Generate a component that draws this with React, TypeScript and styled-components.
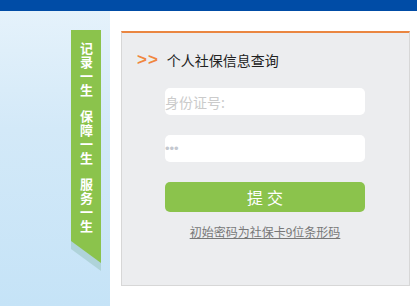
import styled, { createGlobalStyle } from "styled-components";

const GlobalStyle = createGlobalStyle`
  html, body {
    margin: 0;
    padding: 0;
    background: #fff;
    font-family: "Noto Sans CJK SC", "Liberation Sans", sans-serif;
  }
`;

const Page = styled.div`
  width: 417px;
  height: 306px;
  display: flex;
  flex-direction: column;
  overflow: hidden;
`;

const TopBar = styled.div`
  height: 11px;
  background: #004ca6;
  flex: 0 0 auto;
`;

const Body = styled.div`
  flex: 1;
  display: flex;
`;

const Side = styled.div`
  width: 110px;
  flex: 0 0 auto;
  background: linear-gradient(to bottom, #e5f2fb 0%, #d3e9f8 40%, #c5e3f7 100%);
  padding: 19px 0 0 71px;
  box-sizing: border-box;
`;

const Ribbon = styled.div`
  position: relative;
  width: 30px;
  height: 241px;

  &::before {
    content: "";
    position: absolute;
    left: 0;
    top: 8px;
    width: 30px;
    height: 233px;
    background: #afd3d9;
    clip-path: polygon(0 0, 100% 0, 100% 100%, 0 211px);
  }
`;

const RibbonBody = styled.div`
  position: relative;
  width: 30px;
  height: 233px;
  background: #8bc34c;
  clip-path: polygon(0 0, 100% 0, 100% 100%, 0 211px);
  display: flex;
  flex-direction: column;
  align-items: center;
  padding-top: 12px;
  box-sizing: border-box;
  gap: 12px;
`;

const Group = styled.div`
  writing-mode: vertical-rl;
  text-orientation: upright;
  color: #fff;
  font-size: 13px;
  font-weight: bold;
  letter-spacing: 1px;
  line-height: 16px;
`;

const Main = styled.div`
  flex: 1;
  padding: 20px 7px 0 11px;
`;

const Panel = styled.div`
  height: 255px;
  box-sizing: border-box;
  background: #ecedef;
  border: 1px solid #d7d7d7;
  border-top: 2px solid #ea8641;
  padding: 17px 0 0 15px;
`;

const Title = styled.div`
  display: flex;
  align-items: center;
  height: 20px;
  font-size: 14px;
  color: #222;
`;

const Arrows = styled.span`
  color: #f0873f;
  font-family: "Liberation Sans", sans-serif;
  font-weight: bold;
  font-size: 17px;
  letter-spacing: 1px;
  margin-right: 8px;
`;

const Form = styled.div`
  width: 200px;
  margin: 18px 0 0 28px;
  display: flex;
  flex-direction: column;
`;

const Input = styled.input<{ $dots?: boolean }>`
  height: 27px;
  border: none;
  border-radius: 5px;
  background: #fff;
  padding: 0;
  margin-bottom: 20px;
  outline: none;
  font-family: ${(p) => (p.$dots ? '"Liberation Sans", sans-serif' : '"Noto Sans CJK SC", sans-serif')};
  font-size: ${(p) => (p.$dots ? "13px" : "14px")};
  color: #c4c8cf;
  letter-spacing: 0;

  &::placeholder {
    color: #cbcbcb;
  }
`;

const Submit = styled.button`
  height: 30px;
  border: none;
  border-radius: 5px;
  background: #8bc34c;
  color: #fff;
  font-family: "Noto Sans CJK SC", sans-serif;
  font-size: 16px;
  letter-spacing: 4px;
  padding: 0 0 0 4px;
  cursor: pointer;
`;

const Hint = styled.a`
  display: block;
  text-align: center;
  margin-top: 12px;
  font-size: 12px;
  line-height: 16px;
  color: #777;
  text-decoration: underline;
`;

const groups = ["记录一生", "保障一生", "服务一生"];

export default function App() {
  return (
    <>
      <GlobalStyle />
      <Page>
        <TopBar />
        <Body>
          <Side>
            <Ribbon>
              <RibbonBody>
                {groups.map((g) => (
                  <Group key={g}>{g}</Group>
                ))}
              </RibbonBody>
            </Ribbon>
          </Side>
          <Main>
            <Panel>
              <Title>
                <Arrows>&gt;&gt;</Arrows>
                个人社保信息查询
              </Title>
              <Form>
                <Input type="text" placeholder="身份证号:" />
                <Input type="password" defaultValue="123" $dots />
                <Submit>提交</Submit>
                <Hint href="#">初始密码为社保卡9位条形码</Hint>
              </Form>
            </Panel>
          </Main>
        </Body>
      </Page>
    </>
  );
}
